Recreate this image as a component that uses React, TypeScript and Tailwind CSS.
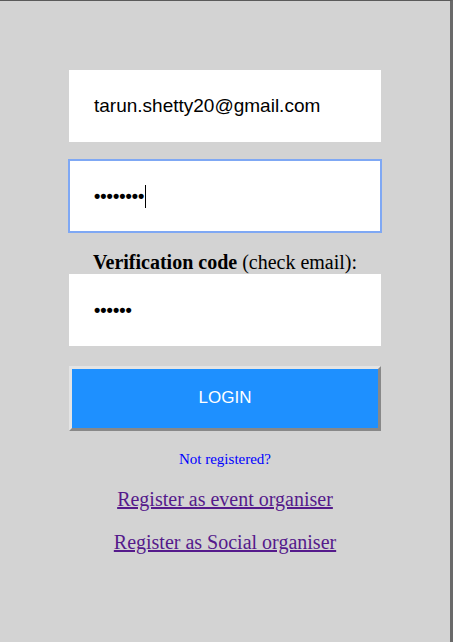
export default function App() {
  return (
    <div className="w-[453px] h-[642px] bg-[#d3d3d3] border-t border-t-[#5a5a5a] border-r-[3px] border-r-[#6a6a6a] overflow-hidden">
      <div className="w-[312px] mx-auto pt-[69px] flex flex-col items-stretch">
        <div className="h-[72px] bg-white flex items-center pl-[25px] text-[19px] text-black font-['Liberation_Sans',Arial,sans-serif]">
          tarun.shetty20@gmail.com
        </div>

        <div className="mt-[18px] h-[72px] bg-white flex items-center pl-[25px] outline-2 outline-[#7fa8f4] -outline-offset-1 font-['Liberation_Sans',Arial,sans-serif]">
          <span className="text-[18px] font-bold text-black">••••••••</span>
          <span className="ml-[1px] w-px h-[23px] bg-black" />
        </div>

        <p className="mt-[19px] text-center text-[20px] leading-[23px] text-black font-['Liberation_Serif','Times_New_Roman',serif]">
          <b>Verification code</b> (check email):
        </p>

        <div className="h-[72px] bg-white flex items-center pl-[25px] font-['Liberation_Sans',Arial,sans-serif]">
          <span className="text-[18px] font-bold text-black">••••••</span>
        </div>

        <button className="mt-[20px] h-[65px] bg-[#1e90ff] border-[3px] border-t-[#e4e4e4] border-l-[#e4e4e4] border-r-[#888888] border-b-[#888888] text-white text-[17px] leading-[20px] pb-[2px] font-['Liberation_Sans',Arial,sans-serif]">
          LOGIN
        </button>

        <p className="mt-[20px] text-center text-[15px] leading-[17px] text-[#0000ff] font-['Liberation_Serif','Times_New_Roman',serif]">
          Not registered?
        </p>

        <div className="mt-[20px] flex flex-col items-center gap-[20px] font-['Liberation_Serif','Times_New_Roman',serif] text-[20px] leading-[23px]">
          <a href="#" className="text-[#551a8b] underline">
            Register as event organiser
          </a>
          <a href="#" className="text-[#551a8b] underline">
            Register as Social organiser
          </a>
        </div>
      </div>
    </div>
  );
}
